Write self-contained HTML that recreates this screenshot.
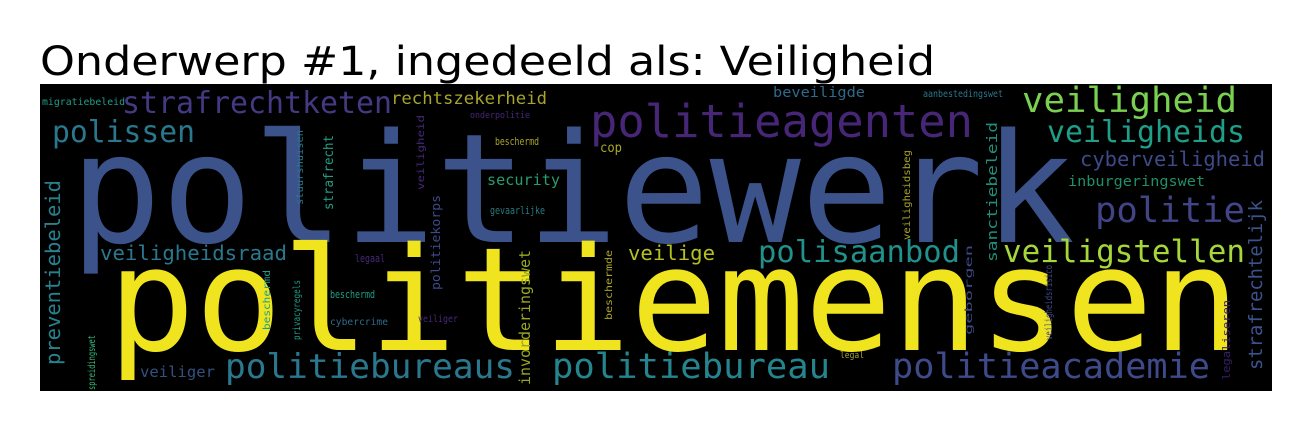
<!DOCTYPE html>
<html><head><meta charset="utf-8"><style>
html,body{margin:0;padding:0;background:#fff;width:1312px;height:431px;overflow:hidden}
svg{display:block}
text{font-family:"DejaVu Sans Mono","Liberation Mono",monospace}
</style></head><body>
<svg width="1312" height="431" viewBox="0 0 1312 431" xmlns="http://www.w3.org/2000/svg">
<text x="40" y="75" style="font-family:'DejaVu Sans','Liberation Sans',sans-serif" font-size="40" fill="#000" textLength="895" lengthAdjust="spacingAndGlyphs">Onderwerp #1, ingedeeld als: Veiligheid</text>
<rect x="40" y="84" width="1232" height="307" fill="#000"/>
<g lengthAdjust="spacingAndGlyphs">
<text x="70" y="242" font-size="152" fill="#3b528b" textLength="1005" lengthAdjust="spacingAndGlyphs">politiewerk</text>
<text x="108" y="350" font-size="144" fill="#f0e41e" textLength="1132" lengthAdjust="spacingAndGlyphs">politiemensen</text>
<text x="122" y="113" font-size="30" fill="#443983" textLength="270" lengthAdjust="spacingAndGlyphs">strafrechtketen</text>
<text x="391" y="104" font-size="17" fill="#a8a52a" textLength="156" lengthAdjust="spacingAndGlyphs">rechtszekerheid</text>
<text x="52" y="142" font-size="30" fill="#2a788e" textLength="143" lengthAdjust="spacingAndGlyphs">polissen</text>
<text x="590" y="137" font-size="45" fill="#482677" textLength="383" lengthAdjust="spacingAndGlyphs">politieagenten</text>
<text x="1022" y="112" font-size="35" fill="#7ad151" textLength="215" lengthAdjust="spacingAndGlyphs">veiligheid</text>
<text x="1047" y="142" font-size="30" fill="#1f9e89" textLength="198" lengthAdjust="spacingAndGlyphs">veiligheids</text>
<text x="1080" y="166" font-size="20" fill="#3e4989" textLength="185" lengthAdjust="spacingAndGlyphs">cyberveiligheid</text>
<text x="1068" y="186" font-size="14" fill="#1f8f6a" textLength="137" lengthAdjust="spacingAndGlyphs">inburgeringswet</text>
<text x="1095" y="222" font-size="35" fill="#414487" textLength="150" lengthAdjust="spacingAndGlyphs">politie</text>
<text x="1003" y="262" font-size="31" fill="#a5d63a" textLength="242" lengthAdjust="spacingAndGlyphs">veiligstellen</text>
<text x="758" y="262" font-size="30" fill="#21918c" textLength="202" lengthAdjust="spacingAndGlyphs">polisaanbod</text>
<text x="628" y="260" font-size="20" fill="#b5c020" textLength="87" lengthAdjust="spacingAndGlyphs">veilige</text>
<text x="100" y="260" font-size="20" fill="#2a788e" textLength="187" lengthAdjust="spacingAndGlyphs">veiligheidsraad</text>
<text x="225" y="378" font-size="34" fill="#2a788e" textLength="290" lengthAdjust="spacingAndGlyphs">politiebureaus</text>
<text x="552" y="378" font-size="35" fill="#25858e" textLength="278" lengthAdjust="spacingAndGlyphs">politiebureau</text>
<text x="892" y="378" font-size="35" fill="#3e4a89" textLength="318" lengthAdjust="spacingAndGlyphs">politieacademie</text>
<text x="140" y="377" font-size="15" fill="#34507f" textLength="75" lengthAdjust="spacingAndGlyphs">veiliger</text>
<text x="487" y="185" font-size="15" fill="#2a9a70" textLength="73" lengthAdjust="spacingAndGlyphs">security</text>
<text x="490" y="214" font-size="11" fill="#2a7a7e" textLength="55" lengthAdjust="spacingAndGlyphs">gevaarlijke</text>
<text x="773" y="97" font-size="14" fill="#2f6a8a" textLength="92" lengthAdjust="spacingAndGlyphs">beveiligde</text>
<text x="923" y="97" font-size="10" fill="#2a788e" textLength="80" lengthAdjust="spacingAndGlyphs">aanbestedingswet</text>
<text x="42" y="105" font-size="10" fill="#1f9e89" textLength="83" lengthAdjust="spacingAndGlyphs">migratiebeleid</text>
<text x="470" y="118" font-size="9" fill="#482878" textLength="60" lengthAdjust="spacingAndGlyphs">onderpolitie</text>
<text x="600" y="152" font-size="13" fill="#a8a52a" textLength="22" lengthAdjust="spacingAndGlyphs">cop</text>
<text x="495" y="145" font-size="11" fill="#a8a52a" textLength="44" lengthAdjust="spacingAndGlyphs">beschermd</text>
<text x="355" y="262" font-size="11" fill="#482878" textLength="30" lengthAdjust="spacingAndGlyphs">legaal</text>
<text x="330" y="298" font-size="11" fill="#1f9e89" textLength="45" lengthAdjust="spacingAndGlyphs">beschermd</text>
<text x="330" y="325" font-size="10" fill="#2f6a8a" textLength="58" lengthAdjust="spacingAndGlyphs">cybercrime</text>
<text x="418" y="322" font-size="10" fill="#482878" textLength="40" lengthAdjust="spacingAndGlyphs">veiliger</text>
<text x="840" y="358" font-size="9" fill="#a8a52a" textLength="24" lengthAdjust="spacingAndGlyphs">legal</text>
<text transform="translate(60,365) rotate(-90)" font-size="20" fill="#26828e" textLength="185" lengthAdjust="spacingAndGlyphs">preventiebeleid</text>
<text transform="translate(1262,370) rotate(-90)" font-size="19" fill="#3b528b" textLength="170" lengthAdjust="spacingAndGlyphs">strafrechtelijk</text>
<text transform="translate(530,385) rotate(-90)" font-size="15" fill="#9aa820" textLength="135" lengthAdjust="spacingAndGlyphs">invorderingswet</text>
<text transform="translate(997,262) rotate(-90)" font-size="14" fill="#1f8f7a" textLength="140" lengthAdjust="spacingAndGlyphs">sanctiebeleid</text>
<text transform="translate(1230,380) rotate(-90)" font-size="11" fill="#3a1e6a" textLength="80" lengthAdjust="spacingAndGlyphs">legaliseren</text>
<text transform="translate(333,210) rotate(-90)" font-size="13" fill="#1f9e89" textLength="75" lengthAdjust="spacingAndGlyphs">strafrecht</text>
<text transform="translate(303,205) rotate(-90)" font-size="10" fill="#2a788e" textLength="75" lengthAdjust="spacingAndGlyphs">stuurshuisen</text>
<text transform="translate(440,290) rotate(-90)" font-size="12" fill="#3e4989" textLength="95" lengthAdjust="spacingAndGlyphs">politiekorps</text>
<text transform="translate(424,190) rotate(-90)" font-size="10" fill="#482878" textLength="75" lengthAdjust="spacingAndGlyphs">veiligheid</text>
<text transform="translate(270,330) rotate(-90)" font-size="10" fill="#1f9e89" textLength="60" lengthAdjust="spacingAndGlyphs">beschermd</text>
<text transform="translate(300,340) rotate(-90)" font-size="10" fill="#1f9e89" textLength="60" lengthAdjust="spacingAndGlyphs">privacyregels</text>
<text transform="translate(95,390) rotate(-90)" font-size="10" fill="#35b779" textLength="55" lengthAdjust="spacingAndGlyphs">spreidingswet</text>
<text transform="translate(612,320) rotate(-90)" font-size="10" fill="#a8a52a" textLength="70" lengthAdjust="spacingAndGlyphs">beschermde</text>
<text transform="translate(910,240) rotate(-90)" font-size="10" fill="#a8a52a" textLength="90" lengthAdjust="spacingAndGlyphs">veiligheidsbeg</text>
<text transform="translate(972,335) rotate(-90)" font-size="10" fill="#3e4989" textLength="90" lengthAdjust="spacingAndGlyphs">geborgen</text>
<text transform="translate(1052,340) rotate(-90)" font-size="10" fill="#3e4989" textLength="75" lengthAdjust="spacingAndGlyphs">veiligheidsrisico</text>
</g>
</svg>
</body></html>
